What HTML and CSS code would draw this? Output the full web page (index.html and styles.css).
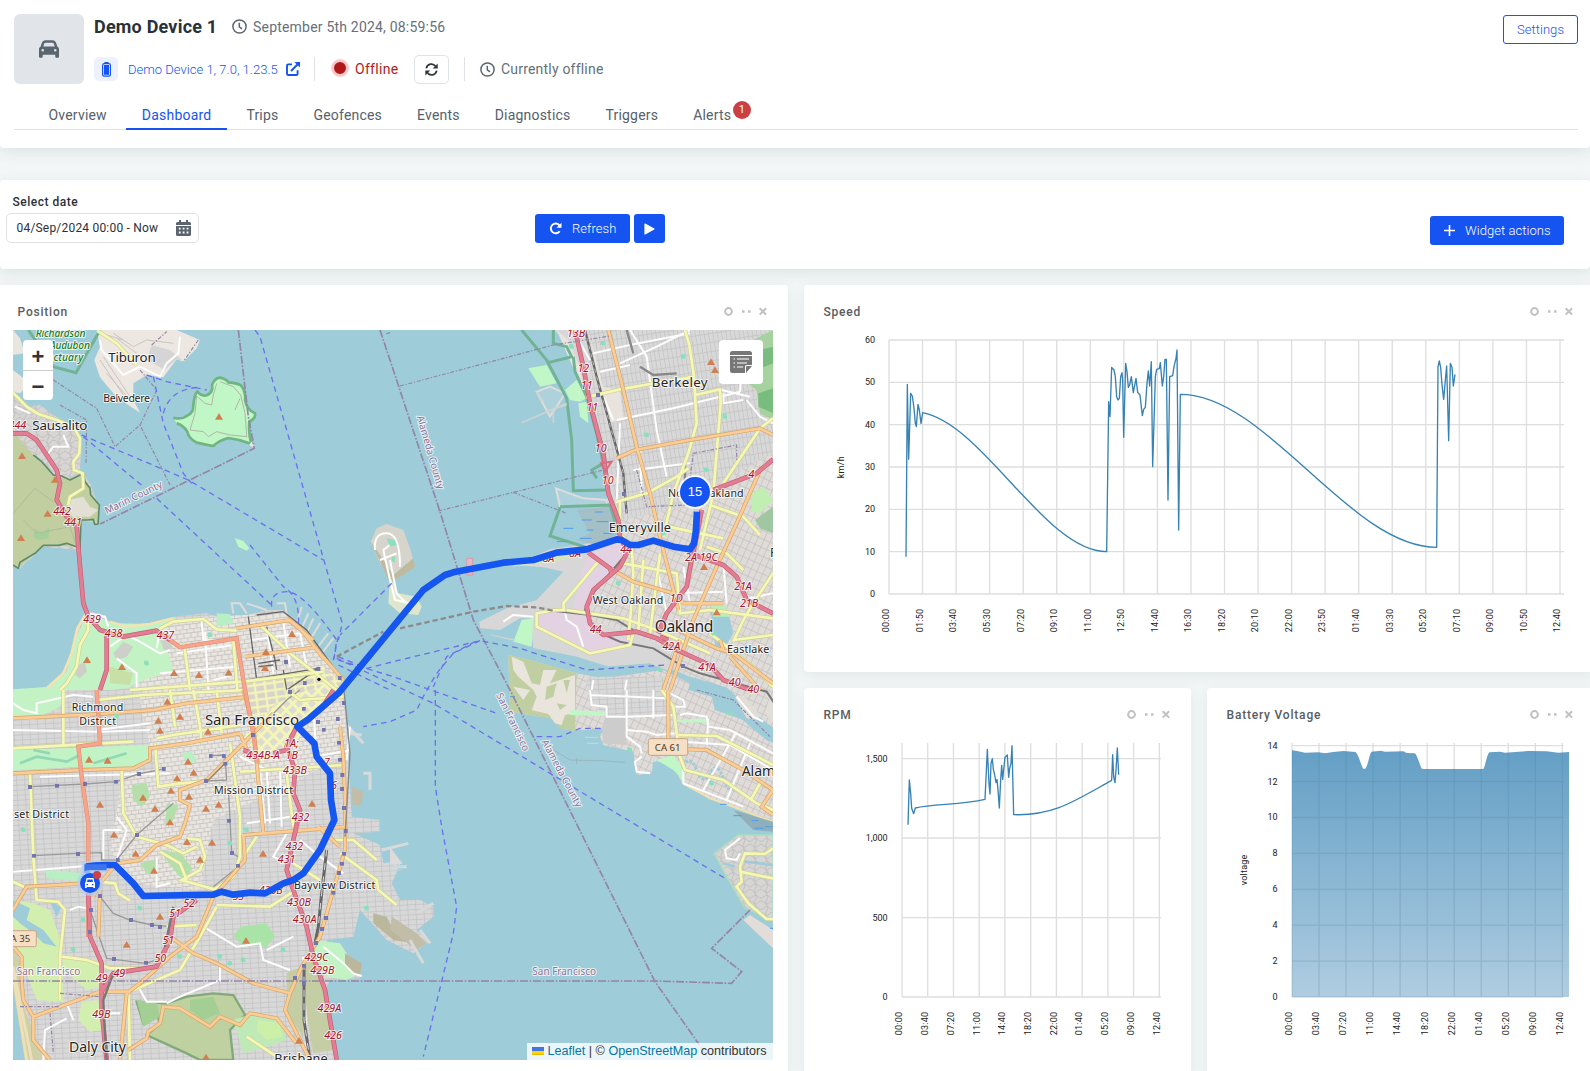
FILE: index.html
```html
<!DOCTYPE html>
<html lang="en">
<head>
<meta charset="utf-8">
<title>Demo Device 1 - Dashboard</title>
<link rel="stylesheet" href="styles.css">
</head>
<body>
<header class="device-header">
  <div class="device-row">
    <div class="avatar">
      <svg width="20" height="20" viewBox="0 0 512 512"><path fill="#5b6570" d="M135.2 117.4L109.1 192H402.9l-26.1-74.6C372.3 104.6 360.2 96 346.6 96H165.4c-13.6 0-25.7 8.6-30.2 21.4zM39.6 196.8L74.8 96.3C88.3 57.8 124.6 32 165.4 32H346.6c40.8 0 77.1 25.8 90.6 64.3l35.2 100.5c23.2 9.6 39.6 32.5 39.6 59.2V448c0 17.7-14.3 32-32 32H448c-17.7 0-32-14.3-32-32V400H96v48c0 17.7-14.3 32-32 32H32c-17.7 0-32-14.3-32-32V256c0-26.7 16.4-49.6 39.6-59.2zM128 288a32 32 0 1 0-64 0 32 32 0 1 0 64 0zm288 32a32 32 0 1 0 0-64 32 32 0 1 0 0 64z"/></svg>
    </div>
    <div class="device-info">
      <div class="info-line first">
        <h1>Demo Device 1</h1>
        <svg class="clock" width="15" height="15" viewBox="0 0 15 15"><circle cx="7.5" cy="7.5" r="6.6"/><path d="M7.3 3.8v4l2.7 2"/></svg>
        <span class="muted stamp">September 5th 2024, 08:59:56</span>
      </div>
      <div class="info-line second">
        <span class="battery-chip"><svg width="9" height="15" viewBox="0 0 9 15"><rect x=".6" y="1.6" width="7.8" height="12.6" rx="1.6" fill="none" stroke="#1554f0" stroke-width="1.2"/><rect x="2" y="3" width="5" height="9.800" fill="#1554f0"/><path d="M2.5 .6h4" stroke="#1554f0" stroke-width="1.2"/></svg></span>
        <a class="device-link">Demo Device 1, 7.0, 1.23.5</a>
        <svg class="ext" width="14" height="14" viewBox="0 0 14 14"><path d="M6 2.4H2.3Q1 2.4 1 3.7v8Q1 13 2.3 13h8q1.300 0 1.300-1.300V8.300M5 9l7.500-7.500" fill="none" stroke="#1554f0" stroke-width="1.900"/><path d="M8.400 0H14v5.600z" fill="#1554f0"/></svg>
        <i class="sep s1"></i>
        <i class="status-dot"></i>
        <span class="offline">Offline</span>
        <span class="sync-btn"><svg width="13" height="13" viewBox="0 0 13 13"><path d="M1.300 5.300A5.200 5.200 0 0 1 10.600 3.200M11.700 7.700A5.200 5.200 0 0 1 2.400 9.800" fill="none" stroke="#30363c" stroke-width="1.700"/><path d="M12.700.6v4.900H7.800zM.3 12.400V7.500h4.900z" fill="#30363c"/></svg></span>
        <i class="sep s2"></i>
        <svg class="clock" width="15" height="15" viewBox="0 0 15 15"><circle cx="7.5" cy="7.5" r="6.6"/><path d="M7.300 3.800v4l2.700 2"/></svg>
        <span class="muted current">Currently offline</span>
      </div>
    </div>
    <button class="btn-outline">Settings</button>
  </div>
  <nav class="tabs">
    <a>Overview</a><a class="active">Dashboard</a><a>Trips</a><a>Geofences</a><a>Events</a><a>Diagnostics</a><a>Triggers</a><a>Alerts<b class="badge">1</b></a>
  </nav>
</header>

<section class="toolbar">
  <div class="date-field">
    <label>Select date</label>
    <div class="date-input"><span>04/Sep/2024 00:00 - Now</span>
      <svg width="15" height="16" viewBox="0 0 15 16"><path fill="#5b6570" d="M3 0h2v2h5V0h2v2h1.500Q15 2 15 3.500V5H0V3.500Q0 2 1.500 2H3zM0 6h15v8.500q0 1.500-1.500 1.500h-12Q0 16 0 14.500z"/><path stroke="#fff" stroke-width="1.800" stroke-dasharray="1.800 2.100" d="M2.800 8.700h10M2.800 12.500h10"/></svg>
    </div>
  </div>
  <div class="run-buttons">
    <button class="btn refresh"><svg width="13" height="13" viewBox="0 0 13 13"><path d="M10.600 3.400A4.900 4.900 0 1 0 10.700 9.300" fill="none" stroke="#fff" stroke-width="1.900"/><path d="M12.500.8v5H7.500z" fill="#fff"/></svg>Refresh</button>
    <button class="btn play"><svg width="11" height="12" viewBox="0 0 11 12"><path d="M1 1l9 5-9 5z" fill="#fff" stroke="#fff" stroke-width="1.200" stroke-linejoin="round"/></svg></button>
  </div>
  <button class="btn actions"><svg width="11" height="11" viewBox="0 0 11 11"><path d="M5.500 0v11M0 5.500h11" stroke="#fff" stroke-width="1.600"/></svg>Widget actions</button>
</section>

<main class="widgets">
  <article class="card position">
    <div class="card-head"><h2>Position</h2><svg class="tools" width="43" height="9" viewBox="0 0 43 9"><circle cx="4.500" cy="4.500" r="3.400"/><path class="dots" d="M18 4.500h2.500M24 4.500h2.500"/><path d="M35.700 1.200l6.400 6.400M42.100 1.200l-6.400 6.400"/></svg></div>
    <div class="map">
      <svg class="map-art" viewBox="39 30 2280 2190" width="760" height="730">
        <defs>
          <pattern id="blocks" width="24" height="15" patternUnits="userSpaceOnUse" patternTransform="rotate(-3)"><rect width="24" height="15" fill="#d9d8d8"/><path d="M0 1h24M1 0v15" stroke="#c2c0c0" stroke-width="2.500"/></pattern>
          <pattern id="tanblocks" width="21" height="26" patternUnits="userSpaceOnUse" patternTransform="rotate(-7)"><rect width="21" height="26" fill="#e9e5e0"/><path d="M0 1h21M1 0v13M12 13v13M0 13h21" stroke="#c8c4c0" stroke-width="3"/></pattern>
          <pattern id="eastblocks" width="13" height="27" patternUnits="userSpaceOnUse" patternTransform="rotate(-9)"><rect width="13" height="27" fill="#d9d8d8"/><path d="M0 1h13M1 0v27" stroke="#c3c1c1" stroke-width="2.500"/></pattern>
          <pattern id="oakblocks" width="19" height="24" patternUnits="userSpaceOnUse" patternTransform="rotate(24)"><rect width="19" height="24" fill="#dedbd8"/><path d="M0 1h19M1 0v24" stroke="#c3bfbd" stroke-width="2.500"/></pattern>
          <pattern id="market" width="27" height="27" patternUnits="userSpaceOnUse" patternTransform="rotate(45)"><rect width="27" height="27" fill="#dedbd2"/><path d="M0 4h27M4 0v27" stroke="#f5f8b4" stroke-width="8"/></pattern>
          <pattern id="downtown" width="30" height="22" patternUnits="userSpaceOnUse" patternTransform="rotate(-8)"><rect width="30" height="22" fill="#d9d4cb"/><path d="M0 4h30M4 0v22" stroke="#f5f8b4" stroke-width="6"/></pattern>
          <pattern id="hills" width="34" height="34" patternUnits="userSpaceOnUse"><rect width="34" height="34" fill="#d8d6d5"/><path d="M0 8q9-9 17 0t17 0M0 25q9 9 17 0t17 0M8 0q7 9 0 17t0 17" fill="none" stroke="#bbb9b8" stroke-width="2.500"/></pattern>
          <marker id="peak" markerUnits="userSpaceOnUse" markerWidth="26" markerHeight="24" refX="12" refY="12"><path d="M12 1l12 20H0z" fill="#d08050"/></marker>
          <marker id="stop" markerUnits="userSpaceOnUse" markerWidth="14" markerHeight="14" refX="6" refY="6"><rect width="12" height="12" fill="#7376ad"/></marker>
          <marker id="pond" markerUnits="userSpaceOnUse" markerWidth="20" markerHeight="20" refX="9" refY="9"><path d="M2 1l12 1 2 12-10 2-5-6z" fill="#8ae0bd"/></marker>

          <g id="yellow">
            <path d="M39 218L80 260 115 282 170 300 220 320 240 355 238 400 220 425 222 450 248 460 250 505 210 530 204 556M292 32L350 70 410 135M262 880L265 930 240 975 230 1040 200 1090 180 1110M480 925L520 905 610 897 650 928 710 932M552 970L570 1110M700 960L712 1110M780 915L870 1000 1010 1110M390 1110L730 1085 970 1055"/>
            <path transform="translate(1170 0)" d="M885 30L898 75 912 170 920 310 895 400 850 520 820 650M588 232L690 208 780 192 915 170M915 225L990 208 992 250 970 520 930 690M1149 295L1110 325 1000 490M680 545L770 520 860 470 895 445M960 555L1060 590 1110 645M690 545L690 640 725 680 730 760 722 880 715 960M625 725L520 850 522 870 495 870 440 880 440 920 600 1000 720 975 730 940M530 870L700 895 800 930 960 1000M700 730L860 760 870 880 960 870 1149 895M760 720L745 930M810 700L780 940M835 620L1000 655M950 680L1010 700 1060 750M960 940L1100 1050 1149 1100M1030 965L1060 900 1090 850 1149 760M1030 960L1149 945"/>
            <path transform="translate(0 1110)" d="M190 0L190 165M39 175L300 160 400 155M290 30L430 15 740 0M510 0L525 110M580 0L600 110 605 160M650 0L665 130M470 145L520 135 720 105M365 240L370 370 410 440 500 465 550 490 590 470M465 160L475 290 540 280 610 275M860 0L900 30 1030 20M720 245L1030 225M690 160L720 380 720 500 700 560 640 600M860 250L880 410M560 445L600 450 615 500 600 540 545 570 650 600M480 485L540 520 560 570M90 250L100 500 110 630 175 635 195 660 180 800 180 930M39 575L75 592M300 575L345 580 355 610 390 632M650 645L810 650 880 605M185 800L260 810 330 835 460 835M400 900L540 840 600 740 650 650M880 520L960 570M1020 490L1130 570 1135 600 1190 645M990 450L1060 450 1130 510M770 440L730 500M500 710L590 705M385 900L390 1110M740 1040L830 1100"/>
            <path transform="translate(1170 1110)" d="M815 0L850 50 860 130 870 200 885 240 1000 270 1050 305 1100 340 1149 360M865 135L980 138 1149 225M1110 280L1085 325M1149 475L1125 492 1065 490 1050 530 1055 575 1040 590 1075 640 1130 687 1149 687M1050 545L1149 565"/>
          </g>
          <g id="orange">
            <path d="M710 925L870 900 900 925 960 1000 1030 1080M735 1010L945 982 970 1015M860 895L940 960"/>
            <path transform="translate(1170 0)" d="M655 30L700 210 740 380 780 520 810 650 865 870M680 415L735 390 900 360 1110 325 1149 345M1115 440L1040 610 980 740 910 900 840 1110M660 745L730 785 850 820 880 850 1000 850M865 930L980 985 1030 1000 1149 1090M1000 990L990 960M870 960L820 1110M1020 1010L1110 1110"/>
            <path transform="translate(0 1110)" d="M39 85L300 72 460 60 560 40 730 22M39 250L250 240 400 235 450 210 450 175 560 160 720 130M730 0L760 110 790 430M720 130L745 190M620 270L540 300 540 330 570 345 555 400 540 440 470 465 420 510 350 520 300 580 280 620M620 270L710 180 820 70M39 660L80 590 260 580M300 600L295 740M1020 110L1030 200 1035 330 1035 480 1000 600 960 740 905 830M730 435L860 425 1040 410M730 435L735 510 640 620 590 740 510 800 420 880 380 910 360 1110M510 740L580 790 650 820 760 880 870 910M905 830L870 910 855 960 930 1110M100 980L300 905 390 905M65 870L70 930 100 980 100 1050 150 1110M385 1080L440 1045 445 1025 480 1000 490 950 540 955 630 1010 660 980 720 1005 750 970 830 985 890 1060M39 770L65 800 65 870M955 410L1020 470"/>
            <path transform="translate(1170 1110)" d="M835 0L835 150M890 178L950 180 1060 240 1149 300M1149 300L1115 350 1149 375"/>
          </g>
          <g id="red">
            <path d="M39 340L80 340 110 360 140 405 170 450 180 490 170 540 200 590 230 620 240 740 250 850 265 890 300 930 370 950 470 932 510 960M320 940L320 1050 300 1110"/>
            <path transform="translate(1170 0)" d="M555 30L580 140 600 250 640 400 655 520 685 600 690 650 710 690M595 698L660 745 665 760M715 690L690 740 610 810 590 860 600 910 640 945 740 935 800 955 850 985 960 1035 1000 1080 1080 1110M1149 418L1100 460 970 510M935 570L920 650 905 720 890 800 830 880 805 940M900 700L1000 735 1040 770 1070 840 1149 880M835 960L810 950"/>
            <path transform="translate(0 1110)" d="M1000 0L975 40M890 110L860 170 885 240 880 310 900 360 880 450 860 540 880 600 920 710 940 800 975 900 990 990 1010 1110M860 180L820 190M590 630L520 680 510 750 470 830 340 850 305 905 305 980M265 610L270 740 305 820 305 960 320 1110M730 180L770 195"/>
          </g>
          <g id="coral">
            <path d="M510 960L540 982 710 955 725 1050 735 1110"/>
            <path transform="translate(0 1110)" d="M735 0L760 130 772 220M290 0L300 160 235 170 245 260 265 400 265 610 265 740"/>
          </g>
          <g id="white">
            <path d="M300 60L305 90 370 165 420 140 480 170 500 130 535 100 540 50M45 260L90 280M145 400L160 380 205 380 190 345M325 920L315 890 260 880M330 980L380 945 410 960 480 1000 510 990M350 1015L410 1060 410 1110M480 925L470 985M615 935L625 1110M605 905L610 960 710 965M530 1000L700 975M480 1060L710 1040M640 1080L700 1065M800 920L820 1060M850 905L870 1040M900 940L920 1040M750 960L900 940"/>
            <path transform="translate(1170 0)" d="M610 100L720 75 900 40M630 155L720 135M690 130L800 80 900 30M720 30L770 110 800 330 830 470M680 300L850 265 1050 215M690 310L680 550M560 50L600 120M750 380L755 520M1050 215L1060 80M640 230L670 300M730 450L900 430M1070 240L1110 290 1149 310M0 720L20 820 50 850M520 850L530 900 560 920 580 980M340 905L370 885 430 890M800 740L830 880M880 740L900 850M1000 730L1010 850M1050 840L1149 820M850 820L1000 815M610 1080L605 1110M710 1080L705 1110M995 210L1080 230M1000 220L1000 250 1060 240"/>
            <path transform="translate(0 1110)" d="M39 40L70 60 110 70 110 40 220 15 280 20M39 120L300 125 450 120M290 120L450 100M120 260L510 250M39 545L260 528 340 525M310 420L310 510 355 510M310 420L365 420M350 380L380 420 350 510M470 500L470 590 510 580M720 200L800 240 810 400M780 240L795 400M840 230L845 410M740 300L870 290M740 400L870 380M860 430L820 500 840 510M900 450L960 500 1030 550M910 800L920 1080M970 770L1030 820 1060 850 1085 858M210 660L235 650 265 655M610 710L710 770 780 760 790 810 870 840M415 890L440 935 500 935M660 830L660 870 540 920 500 940M880 740L800 780M200 940L220 990M130 1110L135 1020 200 985M310 970L360 970M940 60L950 200 1050 180M1050 110L1040 210M880 110L960 180"/>
            <path transform="translate(1170 1110)" d="M600 0L605 45 650 50 650 80 710 80 850 75M710 0L710 140 750 170 755 190M600 15L830 25M790 0L790 85M710 120L770 125 800 135 860 130M755 200L735 215 740 245 780 250M870 75L890 70 950 80 955 110 1020 120 1149 190M880 155L1020 165 1149 240M955 85L950 165M1040 125L940 300M880 240L880 280 1060 350M1080 160L1010 330M820 0L880 30 885 50 850 50M1040 20L1090 80 1120 95M1050 445L1005 480 1010 505 1040 510 1050 490"/>
          </g>
        </defs>
        <rect x="39" y="30" width="2280" height="2190" fill="#9fccd9"/>

        <!-- Marin headlands and Tiburon -->
        <path d="M39 30L60 55 75 100 39 105zM39 150L90 190 60 220 39 215z" fill="#e9e5df"/>
        <path d="M39 215L80 262 120 255 160 285 228 325 243 400 240 450 270 490 300 570 290 610 245 600 235 690 130 680 60 745 39 740z" fill="url(#hills)"/>
        <path d="M39 335L100 405 160 465 210 478 250 460 265 500 298 560 290 602 240 600 235 680 130 676 60 740 39 740z" fill="#c1cea0"/>
        <path d="M100 405L125 425 160 465 185 468 210 480 250 460 255 485 270 505 272 525 298 555 294 612 284 613 280 598 262 600 243 600 240 684 200 670 175 676 130 676 105 700 60 727 55 745 39 735" fill="none" stroke="#5d8d66" stroke-width="5" stroke-linejoin="round"/>
        <path d="M205 540L250 530 270 560 295 570 270 590 215 590z" fill="#e2dfd5"/><path d="M105 625l20 15 25-20-5 35-30 5-15-10z" fill="#a5d09a"/>
        <path d="M39 580L105 505 160 545M70 600L110 640 210 620 230 680" fill="none" stroke="#aeb79c" stroke-width="2.500"/>
        <path d="M290 30L530 30 600 60 590 85 550 125 530 118 490 172 440 165 400 190 400 240 420 278 350 232 300 172 283 120 300 80z" fill="#ece8e1"/>
        <path d="M455 75L510 90 550 122 530 118 495 150 440 120z" fill="#d6d5d6"/>
        <path d="M300 120L380 240M310 110L390 230M320 160L400 250M340 40L400 80 440 60 520 70M350 55L410 100M320 45L370 60" fill="none" stroke="#c9c5bf" stroke-width="3"/>
        <path d="M85 30L160 140 228 158 300 30" fill="none" stroke="#70b395" stroke-width="9"/>
        <path d="M520 293Q545 300 560 288 580 280 580 258 582 225 592 214 605 232 622 225 640 215 636 195 645 173 660 173 680 178 685 187 715 190 723 196 738 215 735 240 740 270 765 280 768 295 748 305 745 345 755 372 720 358 685 354 655 362 640 378 620 375 590 368 565 355 562 335 550 315 530 310 520 293z" fill="#c1f7c6" stroke="#6fb57f" stroke-width="8" stroke-linejoin="round"/>
        <path d="M650 190L640 225 635 255 615 250 590 228 585 280 570 330 610 335 625 350 650 335 690 345 740 350 735 280 722 225 700 200 660 185M705 270L720 235" fill="none" stroke="#a9a8a2" stroke-width="2.500"/>
        <path d="M705 655L730 663 748 685 740 692 715 680z" fill="#c1f7c6"/><path d="M755 365l12 20-20-10z" fill="#eee9e2"/>

        <!-- San Francisco peninsula -->
        <path d="M39 1110L140 1105 190 1062 215 1000 235 920 262 875 300 880 330 905 380 920 450 910 520 890 620 880 690 900 740 885 800 870 850 870 900 910 950 985 1000 1050 1030 1080 1040 1210 1045 1310 1055 1490 1140 1500 1140 1535 1060 1540 1140 1575 1150 1630 1205 1622 1175 1690 1200 1740 1260 1740 1300 1760 1300 1790 1250 1830 1285 1865 1240 1900 1160 1860 1080 1770 1060 1850 980 1860 1000 1910 1085 1965 1080 1975 990 1980 975 2010 990 2110 1015 2220 75 2220 39 1990z" fill="url(#blocks)"/>
        <path d="M430 925L620 890 860 880 950 990 1030 1090 1040 1300 860 1400 640 1500 520 1500 470 1350 430 1200 410 1080z" fill="url(#tanblocks)"/>
        <path d="M370 1350L560 1340 640 1500 600 1710 400 1690 330 1590z" fill="url(#tanblocks)"/>
        <path d="M740 1080L970 1040 1030 1090 1030 1120 920 1190 890 1240 760 1230 720 1130z" fill="url(#downtown)"/>
        <path d="M1000 1080L1030 1120 910 1200 890 1280 790 1330 730 1250 830 1150z" fill="url(#market)"/>
        <path d="M39 1108L150 1100 200 1055 225 960 262 880 340 910 460 912 530 892 520 905 480 925 500 985 520 1050 420 1085 380 1105 330 1110 200 1110 180 1160 100 1200 39 1200z" fill="#c3f2c4"/>
        <path d="M262 875L232 925 215 1000 190 1060 140 1105M330 905L380 920 450 912 520 895" fill="none" stroke="#f1e3b2" stroke-width="8"/>
        <path d="M235 1035l20-10 5 30-20 20-15-10zM340 1000l30-35 30 15-20 30-30 10zM480 960l30 5 10 20-25 12z" fill="#cdd0c8"/>
        <path d="M330 1040l70 20-10 35-60-5z" fill="#c8dfa6"/>
        <path d="M39 1290L240 1283 240 1340 39 1352zM240 1283L445 1275 450 1315 400 1345 240 1340z" fill="#c1f3c5"/>
        <path d="M60 1330L110 1310 200 1325 240 1305M100 1290L150 1300M280 1330L380 1300" fill="none" stroke="#93d8b5" stroke-width="8"/>
        <path d="M395 1395L440 1390 450 1430 425 1460 400 1440zM420 1630L470 1620 475 1655 440 1660zM500 1450L535 1455 520 1500 495 1520zM480 1590L540 1600 575 1640 560 1690 530 1660 500 1620z" fill="#b4dfaa"/>
        <path d="M720 1820L800 1810 825 1850 800 1880 730 1875 700 1850z" fill="#a9e3a8"/>
        <path d="M135 1650L260 1660 260 1685 140 1675zM545 1300l30-5 15 25-25 15z" fill="#b8f0c3"/>
        <path d="M39 1740L100 1750 150 1770 185 1870 190 2045 110 2040 80 1960 39 1850z" fill="#d3efb0"/>
        <path d="M39 1740L90 1765 80 1800 130 1830 170 1880 130 1870 100 1840 60 1810 39 1790zM150 1745L185 1760 170 1790z" fill="#9fccd9"/>
        <path d="M190 1915L310 1925 305 2000 260 2010 190 1950zM245 2045L295 2040 310 2130 270 2135 235 2100z" fill="#d3efb0"/>
        <path d="M39 1880L60 1930 70 2060 110 2160 130 2220 75 2220 39 2000z" fill="#cfd0a8"/>
        <path d="M39 1960L80 2220M39 1940L95 2220" fill="none" stroke="#eddfb6" stroke-width="9"/>
        <path d="M410 2045L500 2050 560 2030 640 2020 700 2025 735 2085 690 2130 700 2220 600 2220 560 2200 440 2145 480 2110 470 2080 430 2110z" fill="#bfd1a0" stroke="#82a979" stroke-width="7"/>
        <path d="M410 2040L470 2050 480 2090 430 2120zM570 2040L640 2030 660 2080 610 2100 570 2070z" fill="#a3cf94"/>
        <path d="M910 1940L935 1900 960 1960 1000 2190 940 2200 920 2080z" fill="#c4cda4"/><path d="M860 1960L905 1940 910 2150 860 2080z" fill="#c4cda4"/>
        <path d="M700 2100L760 2080 840 2100 860 2160 800 2180 730 2200z" fill="#bfeab8"/><path d="M775 2100L840 2110 845 2150 800 2160 770 2130z" fill="#cdf0a8"/>
        <path d="M940 1860L1020 1870 1080 1960 1040 1980 980 1970 960 1930 925 1920z" fill="#c1f3c5"/><path d="M1035 1900L1085 1930 1080 1970 1035 1940zM1120 1780L1160 1790 1180 1830 1240 1870 1180 1860 1120 1810z" fill="#bab79d"/>
        <path d="M1055 1400L1090 1415 1085 1455 1058 1455zM1175 1790L1250 1840 1280 1870 1250 1890 1170 1830z" fill="#c1bda8"/>
        <path d="M1040 1215L1090 1270M1045 1240L1085 1245M1090 1360H1110V1410M1145 1590L1225 1570M1180 1640L1220 1640M1230 1860L1270 1930M1260 1830L1290 1870M1250 1780L1300 1750" fill="none" stroke="#d8dada" stroke-width="9"/>
        <path d="M890 910L905 860M905 925L925 880M920 940L940 895M930 960L960 910M950 985L985 940M965 1000L1000 955M700 880L695 850 720 850 740 880M740 850L800 870M830 850L855 850 860 880" fill="none" stroke="#dddcd8" stroke-width="6"/>
        <path d="M650 880L690 882 700 910 650 920z" fill="#b9efc5"/>

        <!-- Treasure Island and Yerba Buena -->
        <path d="M1112 665L1130 625 1160 612 1210 630 1232 690 1245 740 1220 755 1170 780 1140 730z" fill="#d6d4cb"/><path d="M1112 665L1140 725 1170 790 1182 782 1245 742 1240 715 1180 765 1130 690z" fill="#bdbaa0"/>
        <path d="M1170 770L1195 820 1250 830 1265 860 1255 885 1200 880 1165 850z" fill="#dfe6ce"/>
        <path d="M1125 690Q1120 640 1160 640T1200 740M1140 720L1190 700M1190 660L1150 690 1170 780 1185 840 1230 850" fill="none" stroke="#fff" stroke-width="6"/><path d="M1160 655l25 5 5 15-20 5zM1175 710h10v15h-10z" fill="#8ce0bd"/>

        <!-- East Bay -->
        <g transform="translate(1170 0)">
          <path d="M490 30L530 60 550 115 575 180 590 230 610 290 640 370 665 400 650 430 652 540 690 640 600 670 480 688 370 735 460 742 520 755 440 840 350 865 268 905 270 925 330 930 390 895 420 895 430 985 560 1010 640 1040 780 1030 900 1080 970 1130 1149 1290 1149 30z" fill="#d8d7d7"/>
          <path d="M590 30H1149V400L960 500 900 700 720 690 690 600 640 370 600 200z" fill="url(#eastblocks)"/>
          <path d="M690 600L900 560 960 500 1149 400 1149 1290 1060 1200 900 1080 800 970 600 900 610 820 700 720z" fill="url(#oakblocks)"/>
          <path d="M500 30L535 60 560 120 600 260M595 30L640 200 690 210 700 300 650 310z" fill="#e8e3dd"/>
          <path d="M1090 60L1149 30 1149 300 1110 280 1100 210 1060 180 1060 120z" fill="#a6d2a0"/><path d="M1110 90L1149 80V130L1100 150zM1105 220l44-15v75l-44-20z" fill="#79bd7e"/><path d="M1149 560L1095 600 1110 625 1149 640z" fill="#a0c7a2"/><path d="M1085 520L1120 500 1149 540 1110 580 1085 575z" fill="#c1eeb2"/>
          <path d="M590 705L690 650 715 690 640 790 600 830 590 890 640 945 720 960 700 990 600 1000 440 920 450 880 520 870 540 905z" fill="#e3d3e2"/>
          <path d="M415 145L470 135 500 190 450 200zM525 210L560 180 590 235 570 245 540 240zM565 250L590 245 595 310 570 290zM395 900L430 895 425 980 370 965z" fill="#c1f7c6"/>
          <path d="M500 690L580 700 520 720 365 740 440 705z" fill="#d3e5bd"/>
          <path d="M498 505L580 535 650 540 650 555 510 560zM440 215L480 200 525 220 500 260 480 290z" fill="#aed2dc" stroke="#deddd9" stroke-width="6"/>
          <path d="M560 570L655 560 690 640 620 675 560 660 600 640z" fill="#a5bfc6"/>
          <path d="M395 30L470 120 530 235 545 360 550 512 650 510M490 30V70L530 80 545 110 475 128M550 110L555 155 590 230 620 340 640 430 605 450 620 475M510 562L480 648 590 682M510 560L660 555 680 620" fill="none" stroke="#70b395" stroke-width="9"/>
          <path d="M615 576h25M575 600h30M620 605h35M520 625h30M570 655h35M500 665h30M640 640h25M590 630h20" stroke="#4b9df0" stroke-width="3"/>
          <path d="M960 860L1000 850 1020 900 1030 940 1000 990 975 975z" fill="#9fccd9"/><path d="M960 845L1000 850 1020 890 970 890z" fill="#bdeeb7"/>
          <path d="M395 308L530 250M478 270L530 255M490 268V310M440 215L460 245M300 945L375 960" fill="none" stroke="#ccd3d3" stroke-width="5"/>
          <!-- harbour channel -->
          <path d="M270 935L430 985 560 1010 720 1060 850 1050 960 1095 1149 1225V1330L1000 1200 880 1110 350 1110 280 1000z" fill="#9fccd9"/>
          <path d="M230 715h18v50h-18z" fill="#e5b9c4" stroke="#d98ca0" stroke-width="2"/>
        </g>
        <!-- Alameda and Bay Farm -->
        <g transform="translate(1170 1110)">
          <path d="M355 -105L440 -85 560 -50 640 -35 820 -60 900 -20 960 0 975 60 1060 90 1149 160V390L1060 360 960 325 880 285 840 215 790 215 785 250 740 255 730 185 640 165 630 140 640 115 550 122 480 85 360 65z" fill="url(#oakblocks)"/>
          <path d="M355 -105L440 -85 560 -50 555 122 515 118 480 85 360 65z" fill="#bfcfa2"/>
          <path d="M365 -100L400 -85 425 -20 450 -15 460 -60 500 -60 480 -20 555 -45V70L525 75 515 105 495 100 475 72 425 60 440 20 430 0 385 -40 370 -60zM370 -10L420 0 400 30z" fill="#e9e5dc"/>
          <path d="M470 -10L500 -20 490 20 465 30zM520 -30L540 -30 530 10zM500 40L530 45 510 60z" fill="#bfcfa2"/>
          <path d="M590 -40H830V75H650L600 40z" fill="url(#blocks)"/><path d="M540 60L650 65V78L540 75zM860 90L950 85V98L850 95zM800 210L850 195 880 240 885 275 850 240z" fill="#c1f7c6"/>
          <path d="M645 80H710V165L640 160 635 120z" fill="#cdcccc"/>
          <path d="M900 -20L1000 10 1100 100 1149 140" fill="none" stroke="#9fccd9" stroke-width="40"/>
          <path d="M1035 20L1060 15 1100 60 1110 90 1070 85zM1140 20L1149 25V100L1125 70z" fill="#e1ddd7"/>
          <path d="M490 180L540 210 630 212 705 217M560 205v18" stroke="#9ab6be" stroke-width="3" fill="none"/>
          <path d="M880 230q20-40 40 10t40 10 40 15 30 20" fill="none" stroke="#9fccd9" stroke-width="9" stroke-dasharray="9 4"/>
          <path d="M1149 435H1045L972 490 1010 560 1065 655 1149 690z" fill="url(#hills)" stroke="#a8dfbd" stroke-width="4"/>
          <path d="M1065 515L1149 525M1000 520L1035 530" stroke="#9fccd9" stroke-width="8"/><path d="M1060 690L1080 675 1149 720V775z" fill="#e2ddd8"/>
          <path d="M880 280L960 325 1060 362 1149 395" fill="none" stroke="#efe2ae" stroke-width="6"/><path d="M1030 360L1149 395V425L1090 420z" fill="#91afba"/><path d="M990 343h20M1030 377h25M1085 392h20M1095 415h25M1125 410h22M360 20h15M1140 715h10" stroke="#4b9df0" stroke-width="3"/>
          <path d="M590 160h35M585 142h40M0 530H40M0 540H35" stroke="#c5d8dc" stroke-width="3"/>
        </g>
        <path d="M1170 1580L1208 1632H1170z" fill="#dcdada"/>

        <use href="#white" fill="none" stroke="#fdfdfd" stroke-width="6"/>
        <g fill="none" stroke="#999" stroke-width="4">
          <path d="M90 1400L255 1392 350 1385 415 1362 490 1347M100 1607L235 1600 305 1598 305 1620 350 1620 410 1545 520 1450M617 1383L675 1330 860 1140 900 1110M617 1383L680 1380 675 1310 670 1305 630 1307M685 1400L695 1600 715 1610 715 1640 640 1700M300 1730L340 1780 390 1800 455 1815 520 1820M270 1770L320 1915 435 1930 470 1920"/>
          <path d="M745 890L770 1080M800 920L825 1020 830 1050M770 885L850 875 920 930 1020 1070M775 1030L840 1020M740 1080L955 1045 860 1110 850 1050M775 1040L820 1035" stroke="#666"/>
          <path d="M1755 30L1790 170 1870 460 1880 580" stroke="#666" stroke-width="7"/><path d="M1755 30L1790 170 1870 460 1880 580" stroke="#ddd" stroke-width="2" stroke-dasharray="12 12"/>
          <path d="M1880 30L1900 100M1920 140L1960 165 2030 160M2055 430V500M2075 690L2060 780" stroke="#888" stroke-width="7"/>
          <path d="M1880 700L1770 830 1755 870 1780 930 1860 965 1960 985 2050 1040 2100 1060 2300 1115 2330 1160M1660 872L1770 885 1850 900 1900 930" stroke="#777" stroke-width="6"/>
          <path d="M980 1590L965 1720 955 1820 945 1870M912 1930V2100L930 2220" stroke="#666" stroke-width="9"/><path d="M980 1590L965 1720 955 1820M912 1930V2100L930 2220" stroke="#ddd" stroke-width="3" stroke-dasharray="20 20"/>
        </g>
        <use href="#yellow" fill="none" stroke="#cfd198" stroke-width="12"/>
        <use href="#yellow" fill="none" stroke="#f5f8b4" stroke-width="8"/>
        <use href="#orange" fill="none" stroke="#d9a463" stroke-width="12"/>
        <use href="#orange" fill="none" stroke="#f9cd98" stroke-width="8"/>
        <use href="#coral" fill="none" stroke="#dc8a70" stroke-width="13"/>
        <use href="#coral" fill="none" stroke="#f6a58b" stroke-width="10"/>
        <use href="#red" fill="none" stroke="#c95b76" stroke-width="14" stroke-linejoin="round"/>
        <use href="#red" fill="none" stroke="#e27e91" stroke-width="10" stroke-linejoin="round"/>
        <path d="M1030 1090L1050 1300 1035 1550M675 1330L620 1385" fill="none" stroke="#888" stroke-width="4"/>
        <path d="M1803 430L1835 425 1815 455z" fill="none" stroke="#d96c80" stroke-width="6"/>
        <path d="M340 1960L310 2040 312 2090 320 2220M520 1760L495 1880" fill="none" stroke="#777" stroke-width="7"/>

        <!-- administrative borders -->
        <g fill="none" stroke="#9484a6" stroke-width="4" stroke-dasharray="24 5 5 5">
          <path d="M715 30L745 290 763 385 300 612" stroke-width="5"/>
          <path d="M1140 30L1170 120 1320 575 1420 900 1530 1110 1965 1985 2130 2220" stroke-width="5"/>
          <path d="M39 1983H1965L2195 1990 2225 1955 2135 1885 2250 1770" stroke-width="5"/>
        </g>
        <g fill="none" stroke="#9484a6" stroke-width="3.500" stroke-dasharray="12 5 4 5">
          <path d="M160 180L290 265 345 380 420 315 510 495M420 315L470 210 420 150M180 255L260 300 258 430M1200 198L1660 75 1830 48M1315 573L1540 517 1810 450M1540 517L1700 580M1170 38L1155 42M1910 450L1940 560 2060 555 2080 400 2210 375V420M455 75L500 35M595 60L550 125M180 2020L300 2030M150 2080L160 2200M2090 1110L2200 1140 2310 1250M60 2060H180"/>
        </g>

        <!-- ferry lines -->
        <g fill="none" stroke="#6c70ef" stroke-width="4" stroke-dasharray="17 13">
          <path d="M765 30L780 50 800 120 970 715 1027 910 1015 960M245 345L565 480 970 720M250 350L430 500M470 535L820 860M440 165L500 185 620 210M460 170L490 310 550 460 575 490M490 280Q510 205 600 202M750 675L850 800M815 860Q810 815 860 815T1010 960L1000 1030M895 910Q900 830 850 800M1175 790L1020 945M1015 1010L1100 1045 1200 1020 1440 962 1560 985 1760 1050 2000 1035M1010 1015L1300 1150 2175 1675M1015 1020L1180 1070 1490 1180M1306 1110V1400L1325 1520 1370 1760 1360 1840 1270 2210M1440 962L1360 1000 1310 1060 1275 1120 1250 1170 1170 1205 1090 1220M1015 1035L1170 1110M1610 1250H1680L1740 1225 1810 1225M1015 950L1000 1020M1425 965L1340 1010 1300 1100"/>
        </g>
        <path d="M1010 1010L1150 935M1200 925L1420 875 1520 858 1610 862 1660 872" fill="none" stroke="#8b8b8b" stroke-width="7" stroke-dasharray="16 9"/>

        <polyline fill="none" marker-start="url(#peak)" marker-mid="url(#peak)" marker-end="url(#peak)" points="657,290 66,408 165,479 143,581 63,654 876,942 798,996 795,1044 686,1058 597,1065 522,1059 366,1041 261,1020 2133,126 2145,150 2112,741 2150,877 502,1145 540,1190 475,1202 480,1232 624,1235 267,1319 323,1322 564,1325 581,1358 531,1375 513,1412 567,1430 429,1433 300,1454 465,1466 618,1466 656,1454 510,1507 342,1544 561,1566 636,1568 407,1601 600,1619 462,1652 789,1601 936,1451 480,1790 380,1874 738,1862 897,2162 618,2212"/>
        <polyline fill="none" marker-start="url(#stop)" marker-mid="url(#stop)" marker-end="url(#stop)" points="858,1026 955,1047 1019,1074 914,1089 870,1116 911,1166 954,1206 971,1229 1013,1197 1031,1149 1017,1268 1020,1319 1027,1365 1026,1407 1032,1464 1037,1533 1032,1601 1026,1631 1017,1659 978,1794 1000,1718 966,1827 948,1869 912,1937 885,1974 911,1990 759,1245 671,1308 632,1308 676,1331 618,1383 491,1347 417,1362 348,1385 255,1392 171,1397 90,1401 102,1607 234,1602 353,1620 411,1545 687,1502 696,1599 714,1637 300,1728 273,1770 269,1836 393,1800 456,1815 480,1821 342,1917 438,1928 1794,225 1871,522 2049,1038"/>
        <polyline fill="none" marker-start="url(#pond)" marker-mid="url(#pond)" marker-end="url(#pond)" points="630,945 440,1030 70,1530 250,1800 220,1890 420,1765 740,1530 690,1570 880,1570 850,1890 660,1910 690,1930 540,1910 730,1920 1100,1765 1715,80 1810,70 1940,345 2120,450 1855,790 2175,290 2140,940 1980,1050 2190,1180 2135,1390 1890,1290 2050,110 1990,640 350,1190"/>
        <circle cx="957" cy="1078" r="5"/>

        <g class="place">
          <text x="325" y="126" font-size="40" textLength="142">Tiburon</text>
          <text x="310" y="246" font-size="32" textLength="140">Belvedere</text>
          <text x="97" y="331" font-size="40" textLength="165">Sausalito</text>
          <text x="1955" y="201" font-size="40" textLength="168">Berkeley</text>
          <text x="2004" y="531" font-size="32" textLength="227">North Oakland</text>
          <text x="1826" y="637" font-size="38" textLength="187">Emeryville</text>
          <text x="1778" y="852" font-size="32" textLength="212">West Oakland</text>
          <text x="1964" y="936" font-size="47" textLength="176">Oakland</text>
          <text x="2181" y="998" font-size="32" textLength="127">Eastlake</text>
          <text x="2310" y="712" font-size="37">Fruitvale</text>
          <text x="215" y="1172" font-size="32" textLength="155">Richmond</text>
          <text x="238" y="1215" font-size="32" textLength="110">District</text>
          <text x="615" y="1216" font-size="45" textLength="282">San Francisco</text>
          <text x="642" y="1422" font-size="32" textLength="237">Mission District</text>
          <text x="42" y="1494" font-size="32" textLength="165">set District</text>
          <text x="882" y="1708" font-size="32" textLength="244">Bayview District</text>
          <text x="207" y="2195" font-size="42" textLength="171">Daly City</text>
          <text x="823" y="2230" font-size="38" textLength="160">Brisbane</text>
          <text x="2225" y="1369" font-size="42">Alameda</text>
        </g>
        <g class="park"><text x="107" y="52" textLength="150">Richardson</text><text x="93" y="88" textLength="177">Bay Audubon</text><text x="108" y="124" textLength="142">Sanctuary</text></g>
        <g class="county">
          <text transform="translate(320 583) rotate(-26)" textLength="188">Marin County</text>
          <text transform="translate(1250 290) rotate(74)" textLength="228">Alameda County</text>
          <text transform="translate(1488 1125) rotate(64)" textLength="190">San Francisco</text>
          <text transform="translate(1624 1265) rotate(62)" textLength="225">Alameda County</text>
          <text x="50" y="1964" textLength="191">San Francisco</text><text x="1597" y="1964" textLength="191">San Francisco</text>
        </g>
        <g class="exit">
          <text x="52" y="326">444</text><text x="186" y="585">442</text><text x="219" y="619">441</text><text x="276" y="908">439</text><text x="341" y="951">438</text><text x="496" y="957">437</text>
          <text x="1728" y="51">13B</text><text x="1750" y="157">12</text><text x="1760" y="207">11</text><text x="1777" y="273">11</text><text x="1802" y="396">10</text><text x="1823" y="493">10</text><text x="2254" y="473">4</text><text x="1878" y="700">44</text><text x="1645" y="725">8A</text><text x="1725" y="710">8A</text><text x="2073" y="724">2A</text><text x="2126" y="724">19C</text><text x="2229" y="810">21A</text><text x="2247" y="861">21B</text><text x="2029" y="845">1D</text><text x="1787" y="938">44</text><text x="2014" y="991">42A</text><text x="2121" y="1054">41A</text><text x="2204" y="1098">40</text><text x="2260" y="1120">40</text>
          <text x="874" y="1280">1A;</text><text x="789" y="1316">434B-A</text><text x="875" y="1316">1B</text><text x="885" y="1363">433B</text><text x="981" y="1338">7</text><text x="1002" y="1408">6</text><text x="902" y="1504">432</text><text x="883" y="1589">432</text><text x="860" y="1628">431</text><text x="812" y="1723">430B</text><text x="715" y="1740">53</text><text x="897" y="1757">430B</text><text x="914" y="1808">430A</text><text x="567" y="1762">52</text><text x="525" y="1792">51</text><text x="505" y="1872">51</text><text x="481" y="1926">50</text><text x="358" y="1970">49</text><text x="305" y="1987">49</text><text x="304" y="2094">49B</text><text x="949" y="1924">429C</text><text x="967" y="1962">429B</text><text x="988" y="2076">429A</text><text x="999" y="2157">426</text>
        </g>
        <g class="shield"><rect x="1945" y="1256" width="118" height="50" rx="6"/><text x="2003" y="1292" textLength="77">CA 61</text><rect x="20" y="1832" width="89" height="48" rx="6"/><text x="52" y="1867" textLength="77">CA 35</text></g>

        <path d="M262 1690V1640H320" fill="none" stroke="#b5ccf4" stroke-opacity=".8" stroke-width="34"/>
        <path d="M258 1640L285 1637 320 1635 345 1635 365 1655 400 1690 430 1728 640 1724 665 1715 700 1724 750 1718 795 1720 850 1690 880 1680 910 1660 960 1590 1003 1500 993 1440 990 1360 950 1310 943 1270 892 1220 925 1198 1015 1120 1270 810 1335 765 1360 757 1510 728 1600 720 1670 698 1760 688 1850 658 1865 660 1890 675 1915 675 1960 662 2020 680 2070 688 2082 670 2088 630 2091 575" fill="none" stroke="#1555f0" stroke-width="20" stroke-linejoin="round"/>
        <path d="M262 1660V1642H320" fill="none" stroke="#3d75ed" stroke-width="18"/>
      </svg>
      <div class="zoom-control"><span>+</span><span>&#8722;</span></div>
      <div class="legend-btn"><svg width="22" height="22" viewBox="0 0 22 22"><path fill="#777" d="M2.500 0h17Q22 0 22 2.500V4H0V2.500Q0 0 2.500 0zM0 5h22v9h-5.500q-1.500 0-1.500 1.500V22H2.500Q0 22 0 19.500z"/><path fill="#777" d="M16 22v-6q0-1 1-1h5z"/><path d="M7 8h12M7 12h10M7 16h6M3.500 8h1.500M3.500 12h1.500M3.500 16h1.500" stroke="#fff" stroke-width="1.200"/></svg></div>
      <div class="cluster">15</div>
      <div class="vehicle"><svg width="10" height="10" viewBox="0 0 10 10"><path fill="#fff" fill-rule="evenodd" d="M1.500 0h7l.8 4 .7.800V10H8.300V9H1.700v1H0V4.800L.7 4zM2.500 1.500L2 4h6l-.5-2.500zM1.500 6v1.200H3V6zM7 6v1.200h1.500V6z"/></svg><i></i></div>
      <div class="attribution"><svg width="12" height="8" viewBox="0 0 12 8"><path fill="#4374df" d="M0 0h12v4H0z"/><path fill="#ffd500" d="M0 4h12v3H0z"/><path fill="#e3b900" d="M0 7h12v1H0z"/></svg> <a>Leaflet</a> | &copy; <a>OpenStreetMap</a> contributors</div>
    </div>
  </article>

  <article class="card speed">
    <div class="card-head"><h2>Speed</h2><svg class="tools" width="43" height="9" viewBox="0 0 43 9"><circle cx="4.500" cy="4.500" r="3.400"/><path class="dots" d="M18 4.500h2.500M24 4.500h2.500"/><path d="M35.700 1.200l6.400 6.400M42.100 1.200l-6.400 6.400"/></svg></div>
    <svg class="chart" id="speed" viewBox="12 135 2370 1041" width="790" height="347"></svg>
  </article>
  <article class="card rpm">
    <div class="card-head"><h2>RPM</h2><svg class="tools" width="43" height="9" viewBox="0 0 43 9"><circle cx="4.500" cy="4.500" r="3.400"/><path class="dots" d="M18 4.500h2.500M24 4.500h2.500"/><path d="M35.700 1.200l6.400 6.400M42.100 1.200l-6.400 6.400"/></svg></div>
    <svg class="chart" id="rpm" viewBox="12 144 1161 1029" width="387" height="343"></svg>
  </article>
  <article class="card battery">
    <div class="card-head"><h2>Battery Voltage</h2><svg class="tools" width="43" height="9" viewBox="0 0 43 9"><circle cx="4.500" cy="4.500" r="3.400"/><path class="dots" d="M18 4.500h2.500M24 4.500h2.500"/><path d="M35.700 1.200l6.400 6.400M42.100 1.200l-6.400 6.400"/></svg></div>
    <svg class="chart" id="battery" viewBox="51 144 1161 1029" width="387" height="343">
      <defs><linearGradient id="volt" x1="0" y1="0" x2="0" y2="1"><stop offset="0" stop-color="#3682b4" stop-opacity=".77"/><stop offset="1" stop-color="#3682b4" stop-opacity=".4"/></linearGradient></defs>
    </svg>
  </article>
</main>
<script src="script.js"></script>
</body>
</html>
```

FILE: styles.css
```css
* { box-sizing: border-box; }
html, body { height: 100%; overflow: hidden; }
body { margin: 0; background: #f2f6f7; font-family: Roboto, "Liberation Sans", sans-serif; color: #2b3137; }
button { font-family: inherit; cursor: pointer; }
h1, h2 { margin: 0; }
svg { display: block; }

.device-header { height: 148px; background: #fff; padding: 14px 12px 0 14px; border-radius: 0 0 4px 4px; box-shadow: 0 4px 14px rgba(40, 60, 60, .1); }
.device-row { display: flex; height: 70px; }
.avatar { width: 70px; height: 70px; border-radius: 6px; background: #e1e5ea; display: flex; align-items: center; justify-content: center; padding-right: 1px; }
.device-info { flex: 1; padding-left: 10px; }
.info-line { display: flex; align-items: center; }
.first { height: 25px; }
.second { height: 28px; margin-top: 16px; }
h1 { font-size: 18px; font-weight: 700; letter-spacing: .2px; line-height: 25px; width: 138px; margin-top: -1px; white-space: nowrap; }
.clock { fill: none; stroke: #5b6570; stroke-width: 1.500; }
.muted { color: #66707a; font-size: 14px; letter-spacing: .2px; white-space: nowrap; }
.stamp { margin-left: 6px; margin-top: 1px; }
.current { margin-left: 6px; }
.battery-chip { width: 24px; height: 24px; border-radius: 5px; background: #edf1fe; display: flex; align-items: center; justify-content: center; }
.device-link { margin-left: 10px; width: 158px; font-size: 13px; font-weight: 300; letter-spacing: .02px; color: #1554f0; white-space: nowrap; }
.sep { width: 1px; height: 24px; background: #dfe2e6; }
.s1 { margin-left: 14px; }
.status-dot { width: 18px; height: 18px; margin: -2px 6px 0 16px; border-radius: 50%; background: #b01919; border: 3px solid #fcc8cc; }
.offline { color: #b01c1c; font-size: 14px; letter-spacing: .3px; width: 59px; }
.sync-btn { width: 35px; height: 29px; border: 1px solid #dfe2e6; border-radius: 5px; display: flex; align-items: center; justify-content: center; padding-right: 1px; }
.s2 { margin: 0 15px; }
.btn-outline { width: 75px; height: 29px; margin-top: 1px; border: 1px solid #1554f0; border-radius: 3px; background: #fff; color: #1554f0; font-size: 13px; font-weight: 300; letter-spacing: .05px; padding: 0; }

.tabs { display: flex; margin-top: 17px; height: 29px; border-bottom: 1px solid #e0e3e6; padding-left: 17px; }
.tabs a { position: relative; height: 29px; padding: 0 17.500px; line-height: 28px; font-size: 14px; letter-spacing: .2px; color: #56616b; white-space: nowrap; }
.tabs .active { color: #1554f0; padding: 0 15.500px; margin: 0 2px; border-bottom: 2px solid #1554f0; }
.badge { position: absolute; top: 0; right: -2px; width: 18px; height: 18px; border-radius: 50%; background: #cb4042; color: #fff; font-size: 11px; font-weight: 400; letter-spacing: 0; line-height: 17px; text-align: center; }

.toolbar { margin-top: 32px; height: 89px; background: #fff; border-radius: 4px; box-shadow: 0 4px 14px rgba(40, 60, 60, .1); display: grid; grid-template-columns: 529px 1fr 134px; padding: 0 26px 0 6px; }
.date-field label { display: block; margin: 14px 0 3px 6.500px; height: 16px; line-height: 16px; font-size: 12px; font-weight: 500; letter-spacing: .5px; }
.date-input { width: 193px; height: 30px; border: 1px solid #e0e3e6; border-radius: 5px; padding: 0 7px 0 9.500px; display: flex; align-items: center; justify-content: space-between; font-size: 12px; letter-spacing: .2px; }
.run-buttons { display: flex; gap: 4px; padding-top: 34px; }
.btn { height: 29px; border: 0; border-radius: 3px; background: #1554f0; color: #fff; font-weight: 300; font-size: 13px; letter-spacing: .05px; display: flex; align-items: center; padding: 0; white-space: nowrap; }
.refresh { width: 95px; gap: 10px; padding-left: 14px; }
.play { width: 31px; justify-content: center; }
.actions { margin-top: 36px; width: 134px; gap: 10px; padding-left: 14px; }

.widgets { display: grid; grid-template-columns: 790px 387px 387px; grid-template-rows: 387px 387px; gap: 16px; margin: 16px -4px 0 -2px; width: 1596px; }
.card { background: #fff; border-radius: 4px; box-shadow: 0 4px 14px rgba(40, 60, 60, .08); overflow: hidden; }
.position { grid-row: span 2; }
.speed { grid-column: span 2; }
.card-head { height: 40px; padding: 13px 21px 0 19.500px; display: flex; justify-content: space-between; }
h2 { font-size: 12px; line-height: 28px; font-weight: 500; letter-spacing: .8px; color: #5a5d60; }
.tools { margin-top: 9px; fill: none; stroke: #c1c1c1; stroke-width: 2; }
.tools .dots { stroke-width: 2.500; }

.map { position: relative; width: 760px; height: 730px; margin: 5px 0 0 15px; overflow: hidden; }
.map text { font-family: "Noto Sans", sans-serif; paint-order: stroke; stroke: rgba(255, 255, 255, .75); stroke-width: 6px; stroke-linejoin: round; }
.place { fill: #252525; }
.park { fill: #1d7d24; font-size: 31px; font-style: italic; font-weight: 500; }
.county { fill: #8c7196; font-size: 30px; }
.exit { fill: #a3142a; font-size: 32px; font-style: italic; text-anchor: middle; }
.shield rect { fill: #f6dfc5; stroke: #c9a584; stroke-width: 3; }
.map .shield text { fill: #4f3720; font-size: 29px; text-anchor: middle; stroke: none; }
.zoom-control { position: absolute; left: 10px; top: 10px; width: 30px; height: 60px; background: #fff; border-radius: 4px; overflow: hidden; }
.zoom-control span { display: block; height: 30px; font: bold 22px/33px "Liberation Sans", sans-serif; text-align: center; color: #343434; }
.zoom-control span + span { border-top: 1px solid #ccc; line-height: 31px; }
.legend-btn { position: absolute; left: 706px; top: 10px; width: 44px; height: 44px; border-radius: 4px; background: #fff; display: flex; align-items: center; justify-content: center; }
.cluster { position: absolute; left: 667px; top: 147px; width: 30px; height: 30px; border-radius: 50%; background: #1554f0; color: #fff; font: 13px/29px "Liberation Sans", sans-serif; text-align: center; box-shadow: 0 0 0 2px rgba(255, 255, 255, .8); }
.vehicle { position: absolute; left: 67px; top: 543px; width: 20px; height: 20px; border-radius: 50%; background: #1554f0; display: flex; align-items: center; justify-content: center; box-shadow: 0 0 0 3px rgba(180, 205, 245, .7); }
.vehicle i { position: absolute; left: 13px; top: -2px; width: 8px; height: 8px; border-radius: 50%; background: #cb4042; }
.attribution { position: absolute; right: 0; bottom: 0; width: 246px; height: 17px; padding: 0 5px; background: rgba(255, 255, 255, .8); font: 12.600px/16px "Liberation Sans", sans-serif; color: #333; white-space: nowrap; }
.attribution svg { display: inline-block; }
.attribution a { color: #0078a8; }

.chart text { font-family: Roboto, sans-serif; font-size: 27px; fill: #222; }
.chart .grid { fill: none; stroke: #dedede; stroke-width: 4; }
.chart .line { fill: none; stroke: #3682b4; stroke-width: 4; stroke-linejoin: round; }
```

FILE: script.js
```js
// Renders axes, grid and series; chart units are thirds of a pixel.
const NS = 'http://www.w3.org/2000/svg';
function add(svg, tag, attrs, text) {
  const el = document.createElementNS(NS, tag);
  for (const k in attrs) el.setAttribute(k, attrs[k]);
  if (text !== undefined) el.textContent = text;
  svg.appendChild(el);
}
function chart(id, c) {
  const svg = document.getElementById(id);
  let d = '';
  c.times.forEach((t, i) => { d += `M${c.x0 + c.dx * i} ${c.top}V${c.bottom}`; });
  c.ticks.forEach(([, y]) => { d += `M${c.x0} ${y}H${c.right}`; });
  add(svg, 'path', { class: 'grid', d });
  c.times.forEach((t, i) => add(svg, 'text', {
    transform: `translate(${c.x0 + c.dx * i + 1} ${c.bottom + 115}) rotate(-90)`, textLength: 70
  }, t));
  c.ticks.forEach(([label, y]) => add(svg, 'text', { x: c.labelX, y: y + 9, 'text-anchor': 'end' }, label));
  if (c.unit) add(svg, 'text', { transform: `translate(${c.unitX} ${c.unitY}) rotate(-90)`, 'text-anchor': 'middle', textLength: c.unitLen }, c.unit);
  add(svg, 'path', c.area ? { d: c.series, fill: 'url(#volt)' } : { d: c.series, class: 'line' });
}
const daily = ['00:00', '03:40', '07:20', '11:00', '14:40', '18:20', '22:00', '01:40', '05:20', '09:00', '12:40'];
chart('speed', {
  x0: 267, dx: 100.65, top: 180, bottom: 942, right: 2292, labelX: 225,
  unit: 'km/h', unitX: 131, unitY: 562, unitLen: 66,
  times: ['00:00', '01:50', '03:40', '05:30', '07:20', '09:10', '11:00', '12:50', '14:40', '16:30', '18:20', '20:10', '22:00', '23:50', '01:40', '03:30', '05:20', '07:10', '09:00', '10:50', '12:40'],
  ticks: [[60, 180], [50, 307], [40, 434], [30, 561], [20, 688], [10, 815], [0, 942]],
  series: 'M318 830L322 313 326 538 332 340 337 348 342 385 346 430 349 440 354 373 358 390 363 430 368 398C552 434 736 815 920 815L926 365 930 410 935 262 942 270 946 290 950 350 954 360 958 355 962 290 966 278 968 300 971 472 977 250 981 275 985 322 989 315 994 290 1000 338 1008 295 1013 337 1020 345 1027 407 1031 388 1036 382 1041 310 1045 273 1049 318 1054 245 1058 560 1066 290 1070 268 1078 266 1081 248 1087 318 1091 290 1095 238 1099 238 1104 660 1109 290 1118 287 1122 260 1128 235 1131 210 1136 750 1141 343C1400 343 1650 802 1910 802L1914 260 1918 243 1922 262 1926 315 1931 358 1936 300 1940 258 1946 482 1951 250 1956 262 1960 318 1965 283'
});
chart('rpm', {
  x0: 306, dx: 77.2, top: 189, bottom: 951, right: 1083, labelX: 263, times: daily,
  ticks: [['1,500', 236], ['1,000', 474], ['500', 713], ['0', 951]],
  series: 'M324 434L328 300 332 340 335 385 341 401 346 384C400 370 480 376 555 358L562 208 567 310 570 342 573 250 577 236 580 268 584 285 588 308 591 298 594 330 598 384 602 300 605 256 608 298 612 260 615 232 622 225 626 292 629 265 633 250 636 197 641 404C760 408 820 365 935 301L938 224 941 290 945 308 948 270 952 204 956 284'
});
chart('battery', {
  x0: 306, dx: 81.1, top: 189, bottom: 951, right: 1121, labelX: 263, times: daily, area: true,
  unit: 'voltage', unitX: 170, unitY: 570, unitLen: 92,
  ticks: [[14, 197], [12, 304.7], [10, 412.4], [8, 520], [6, 628], [4, 735.6], [2, 843.3], [0, 951]],
  series: 'M306 211L325 214 345 218 385 217 405 220 430 216 460 213 497 216C510 230 514 267 523 267C532 267 536 230 544 215L573 212 585 215 640 214 650 219 675 220C685 232 692 267 698 267H880C886 258 892 218 899 217L930 215 945 218 1015 213 1070 214 1105 218 1137 216V951H306Z'
});
```
